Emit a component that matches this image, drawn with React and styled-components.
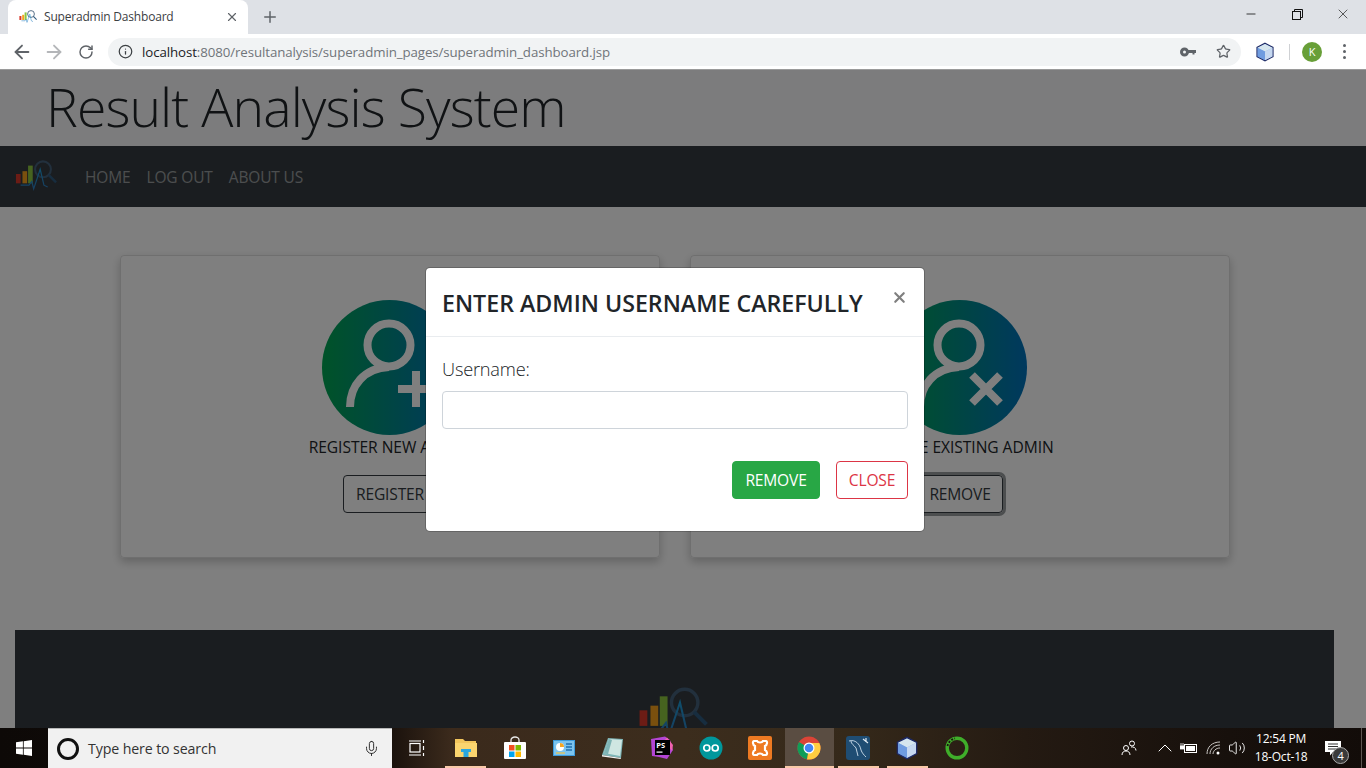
import styled, { createGlobalStyle } from "styled-components";
import { ArrowLeft, ArrowRight, RotateCw, Star, X, Plus, Minus, Info, Mic, ChevronUp, Volume2 } from "lucide-react";

const GlobalStyle = createGlobalStyle`
  html, body { margin: 0; padding: 0; overflow: hidden; }
  body { font-family: "Open Sans", "Liberation Sans", sans-serif; color: #212529; }
  * { box-sizing: border-box; }
`;

const Screen = styled.div`
  width: 1366px;
  height: 768px;
  display: flex;
  flex-direction: column;
  overflow: hidden;
`;

/* browser chrome */
const TabStrip = styled.div`
  height: 34px;
  flex: none;
  background: #dee1e6;
  display: flex;
  align-items: flex-end;
  padding-left: 8px;
`;

const Tab = styled.div`
  width: 240px;
  height: 34px;
  background: #fff;
  border-radius: 8px 8px 0 0;
  display: flex;
  align-items: center;
  padding: 0 9px 0 11px;
  font-size: 12px;
  letter-spacing: -0.2px;
  color: #3c4043;
`;

const TabTitle = styled.span`
  flex: 1;
  margin-left: 7px;
  margin-top: -1px;
`;

const NewTab = styled.div`
  width: 44px;
  height: 34px;
  display: flex;
  align-items: center;
  justify-content: center;
  color: #5f6368;
`;

const WindowButtons = styled.div`
  margin-left: auto;
  height: 34px;
  display: flex;
`;

const WindowButton = styled.div`
  width: 46px;
  height: 28px;
  display: flex;
  align-items: center;
  justify-content: center;
  color: #111;
`;

const Toolbar = styled.div`
  height: 36px;
  flex: none;
  background: #fff;
  border-bottom: 1px solid #9a9a9a;
  display: flex;
  align-items: center;
  padding: 0 6px;
`;

const NavButton = styled.div`
  width: 32px;
  height: 28px;
  display: flex;
  align-items: center;
  justify-content: center;
  color: ${(props) => (props.$disabled ? "#b4b6b9" : "#5f6368")};
`;

const Omnibox = styled.div`
  width: 1133px;
  height: 28px;
  margin-left: 6px;
  border-radius: 14px;
  background: #f1f3f4;
  display: flex;
  align-items: center;
  padding: 0 10px;
  color: #5f6368;
`;

const Url = styled.div`
  flex: 1;
  margin-left: 9px;
  font-size: 13.3px;
  letter-spacing: -0.1px;
  color: #70757a;
  b { font-weight: 400; color: #202124; }
`;

const OmniIcon = styled.div`
  display: flex;
  align-items: center;
  margin-left: ${(props) => props.$gap || 0}px;
`;

const ToolbarEnd = styled.div`
  flex: 1;
  display: flex;
  align-items: center;
  padding-left: 14px;
`;

const Divider = styled.div`
  width: 1px;
  height: 16px;
  background: #cfd1d4;
  margin: 0 12px 0 14px;
`;

const Avatar = styled.div`
  width: 20px;
  height: 20px;
  border-radius: 50%;
  background: #689f38;
  color: #fff;
  font-size: 11px;
  display: flex;
  align-items: center;
  justify-content: center;
`;

const Dots = styled.div`
  margin-left: 21px;
  display: flex;
  flex-direction: column;
  gap: 3px;
  i { width: 3px; height: 3px; border-radius: 50%; background: #5f6368; display: block; }
`;

/* page under the modal */
const Page = styled.div`
  position: relative;
  flex: 1;
  overflow: hidden;
  background: #fff;
`;

const Masthead = styled.div`
  height: 76px;
  background: #f8f9fa;
  padding-left: 46px;
`;

const Title = styled.h1`
  margin: 0;
  font-size: 53.5px;
  font-weight: 300;
  line-height: 74px;
  color: #212529;
  letter-spacing: -0.9px;
`;

const Navbar = styled.nav`
  height: 61px;
  background: #343a40;
  display: flex;
  align-items: center;
  padding-left: 15px;
`;

const NavLinks = styled.div`
  display: flex;
  gap: 16px;
  margin-left: 28px;
`;

const NavLink = styled.a`
  font-size: 15.5px;
  color: rgba(255, 255, 255, 0.5);
  letter-spacing: -0.15px;
`;

const CardRow = styled.div`
  display: flex;
  justify-content: center;
  gap: 30px;
  width: 1350px;
  padding-top: 48px;
`;

const Card = styled.div`
  width: 540px;
  height: 303px;
  border: 1px solid rgba(0, 0, 0, 0.125);
  border-radius: 4px;
  box-shadow: 0 4px 10px rgba(0, 0, 0, 0.22);
  display: flex;
  flex-direction: column;
  align-items: center;
  padding-top: 44px;
`;

const Badge = styled.svg`
  width: 135px;
  height: 135px;
  display: block;
  margin-right: 1px;
`;

const CardLabel = styled.div`
  margin-top: 1px;
  font-size: 15.6px;
  line-height: 22px;
  letter-spacing: -0.05px;
  white-space: nowrap;
`;

const CardButton = styled.div`
  margin-top: 17px;
  height: 38px;
  width: ${(props) => props.$width}px;
  border: 1px solid #343a40;
  border-radius: 4px;
  display: flex;
  align-items: center;
  justify-content: center;
  font-size: 15.6px;
  letter-spacing: -0.2px;
  color: #343a40;
  ${(props) => props.$focused && "box-shadow: 0 0 0 3px rgba(52, 58, 64, 0.5);"}
`;

const Footer = styled.footer`
  margin: 72px 32px 0 15px;
  height: 200px;
  background: #343a40;
  display: flex;
  justify-content: center;
  padding: 57px 4px 0 0;
`;

/* modal */
const Backdrop = styled.div`
  position: absolute;
  inset: 0;
  background: rgba(0, 0, 0, 0.5);
  padding: 197px 16px 0 0;
  display: flex;
  justify-content: center;
  align-items: flex-start;
`;

const Modal = styled.div`
  width: 500px;
  height: 265px;
  background: #fff;
  border: 1px solid rgba(0, 0, 0, 0.2);
  border-radius: 5px;
  background-clip: padding-box;
`;

const ModalHeader = styled.div`
  height: 69px;
  border-bottom: 1px solid #e9ecef;
  padding: 0 16px;
  display: flex;
  align-items: center;
  justify-content: space-between;
`;

const ModalTitle = styled.h4`
  margin: 2px 0 0;
  font-size: 23.2px;
  font-weight: 600;
  letter-spacing: 0;
  color: #212529;
  white-space: nowrap;
`;

const CloseX = styled.div`
  color: #7f7f7f;
  margin: -10px 0 0 0;
  display: flex;
`;

const ModalBody = styled.div`
  padding: 19px 16px 0;
`;

const FieldLabel = styled.label`
  display: block;
  font-size: 18.2px;
  font-weight: 300;
  line-height: 26px;
  letter-spacing: -0.2px;
  color: #212529;
`;

const TextInput = styled.input`
  display: block;
  width: 100%;
  height: 38px;
  margin-top: 9px;
  border: 1px solid #ced4da;
  border-radius: 4px;
  background: #fff;
`;

const ModalFooter = styled.div`
  display: flex;
  justify-content: flex-end;
  gap: 16px;
  margin-top: 32px;
`;

const ModalButton = styled.div`
  height: 38px;
  width: ${(props) => props.$width}px;
  border-radius: 4px;
  display: flex;
  align-items: center;
  justify-content: center;
  font-size: 15.6px;
  letter-spacing: -0.2px;
  border: 1px solid ${(props) => (props.$danger ? "#dc3545" : "#28a745")};
  background: ${(props) => (props.$danger ? "#fff" : "#28a745")};
  color: ${(props) => (props.$danger ? "#dc3545" : "#fff")};
`;

/* taskbar */
const Taskbar = styled.div`
  height: 40px;
  flex: none;
  display: flex;
  align-items: center;
  background: linear-gradient(90deg, #0d0907 0%, #150e0a 28%, #3b2a1c 33%, #3c2d1d 50%, #35291a 62%, #241a12 75%, #17100c 90%, #120c09 100%);
`;

const StartButton = styled.div`
  width: 48px;
  height: 40px;
  display: flex;
  align-items: center;
  justify-content: center;
`;

const SearchBox = styled.div`
  width: 344px;
  height: 40px;
  background: #f1f1f1;
  border-top: 1px solid #b8b8b8;
  display: flex;
  align-items: center;
  padding: 0 12px 0 9px;
  font-size: 14.2px;
  letter-spacing: -0.12px;
  color: #333;
`;

const Cortana = styled.div`
  width: 22px;
  height: 22px;
  border: 3px solid #111;
  border-radius: 50%;
  margin-right: 9px;
`;

const SearchText = styled.span`
  flex: 1;
`;

const TaskCell = styled.div`
  position: relative;
  width: 49.1px;
  height: 40px;
  flex: none;
  display: flex;
  align-items: center;
  justify-content: center;
  background: ${(props) => (props.$active ? "#5a4d42" : "transparent")};
  &::after {
    content: "";
    display: ${(props) => (props.$running ? "block" : "none")};
    position: absolute;
    left: ${(props) => (props.$active ? 0 : 4)}px;
    right: ${(props) => (props.$active ? 0 : 4)}px;
    bottom: 0;
    height: 2px;
    background: #f9c9a8;
  }
`;

const Tray = styled.div`
  flex: 1;
  display: flex;
  align-items: center;
  color: #fff;
  height: 40px;
  padding-left: 140px;
`;

const TrayIcon = styled.div`
  display: flex;
  align-items: center;
  margin-left: ${(props) => props.$gap || 0}px;
`;

const Clock = styled.div`
  width: 70px;
  margin-left: 0;
  text-align: center;
  font-size: 12px;
  line-height: 18px;
  letter-spacing: -0.2px;
`;

const Notify = styled.div`
  position: relative;
  margin-left: 9px;
  display: flex;
`;

const NotifyCount = styled.span`
  position: absolute;
  right: -8px;
  bottom: -8px;
  width: 17px;
  height: 17px;
  border-radius: 50%;
  background: #3a3a3a;
  border: 1px solid #aaa;
  color: #fff;
  font-size: 11px;
  line-height: 15px;
  text-align: center;
`;

const ShowDesktop = styled.div`
  width: 1px;
  height: 40px;
  background: #5c5651;
  margin-left: 20px;
`;

function Logo({ width, gid }) {
  return (
    <svg width={width} height={(width * 35) / 45} viewBox="0 0 45 35" fill="none">
      <defs>
        <linearGradient id={gid} x1="0" x2="0" y1="0" y2="1">
          <stop offset="0" stopColor="#1d9ad6" />
          <stop offset="1" stopColor="#2f7fc1" />
        </linearGradient>
      </defs>
      <rect x="1" y="15" width="5" height="10" fill="#d9392b" />
      <rect x="8" y="12" width="5" height="13" fill="#f5a11c" />
      <rect x="14" y="6" width="5" height="19" fill="#8cc63f" />
      <circle cx="30" cy="10" r="8.5" stroke="#44607a" strokeWidth="2.2" />
      <path d="M36 16 L44 24" stroke="#2e5a7e" strokeWidth="2.6" />
      <path d="M6 27 H15 L18 23 L20 31 L27 10 L31 27 L35 29" stroke={`url(#${gid})`} strokeWidth="1.3" />
    </svg>
  );
}

function PersonBadge({ gid, mark }) {
  return (
    <Badge viewBox="0 0 135 135">
      <defs>
        <linearGradient id={gid} x1="0" x2="1" y1="0" y2="0">
          <stop offset="0" stopColor="#00a651" />
          <stop offset="1" stopColor="#0071bc" />
        </linearGradient>
      </defs>
      <circle cx="67.5" cy="67.5" r="67.5" fill={`url(#${gid})`} />
      <g stroke="#fff" strokeWidth="8" fill="none">
        <circle cx="67" cy="45" r="21.5" />
        <path d="M28 107 C28 86 42 68 67 67" />
        {mark === "plus" ? (
          <path d="M76 89 H112 M94 71 V107" />
        ) : (
          <path d="M80 75 L108 103 M108 75 L80 103" />
        )}
      </g>
    </Badge>
  );
}

function WindowsMark() {
  return (
    <svg width="16" height="16" viewBox="0 0 16 16" fill="#fff">
      <path d="M0 2.3 L6.9 1.3 V7.6 H0 Z M7.7 1.2 L16 0 V7.6 H7.7 Z M0 8.4 H6.9 V14.7 L0 13.7 Z M7.7 8.4 H16 V16 L7.7 14.8 Z" />
    </svg>
  );
}

function KeyIcon() {
  return (
    <svg width="16" height="10" viewBox="0 0 16 10" fill="#5f6368">
      <path d="M4.500 0.500 A4.500 4.500 0 1 1 4.500 9.500 A4.500 4.500 0 0 1 4.500 0.500 Z M4.500 3.500 A1.500 1.500 0 1 0 4.500 6.500 A1.500 1.500 0 0 0 4.500 3.500 Z" fillRule="evenodd" />
      <path d="M8 3 H16 V6 H14.500 V7.500 H12.500 V6 H8 Z" />
    </svg>
  );
}

function CubeIcon({ size }) {
  return (
    <svg width={size} height={size} viewBox="0 0 24 24">
      <path d="M12 1.5 L21.5 6.5 V17.5 L12 22.5 L2.500 17.5 V6.5 Z" fill="#8fb4e8" stroke="#1e2a66" strokeWidth="1.600" />
      <path d="M12 11.500 L21 6.800 L12 2.500 L3 6.800 Z" fill="#d6e6ee" />
      <path d="M12 11.500 V22 L21 17.300 V6.800 Z" fill="#c6d8f0" />
      <path d="M3 6.800 L12 11.500 V22 L3 17.300 Z" fill="#6f9ce0" />
    </svg>
  );
}

function ExplorerIcon() {
  return (
    <svg width="22" height="20" viewBox="0 0 22 20">
      <path d="M0 1 H8 L10 3 H21 V19 H0 Z" fill="#f3c65c" />
      <path d="M0 5 H22 V19 H0 Z" fill="#fbd56f" />
      <path d="M6 14 V11 H16 V14 H13.500 V19 H8.500 V14 Z" fill="#2aa7e0" />
    </svg>
  );
}

function StoreIcon() {
  return (
    <svg width="24" height="24" viewBox="0 0 24 24">
      <path d="M8 7 V4 a4 3 0 0 1 8 0 V7" stroke="#e8e8e8" strokeWidth="1.300" fill="none" />
      <rect x="1" y="6" width="22" height="17" rx="1" fill="#fff" />
      <rect x="6" y="9" width="5.500" height="5.500" fill="#f25022" />
      <rect x="12.500" y="9" width="5.500" height="5.500" fill="#7fba00" />
      <rect x="6" y="15.500" width="5.500" height="5.500" fill="#00a4ef" />
      <rect x="12.500" y="15.500" width="5.500" height="5.500" fill="#ffb900" />
    </svg>
  );
}

function PanelIcon() {
  return (
    <svg width="22" height="16" viewBox="0 0 22 16">
      <rect x="0" y="0" width="22" height="16" fill="#3c9bdc" />
      <rect x="1" y="1" width="20" height="14" fill="#7cc4ef" />
      <circle cx="7" cy="7" r="4" fill="#fff" />
      <path d="M7 7 V3 A4 4 0 0 1 11 7 Z" fill="#f6a623" />
      <path d="M13 4 H19 M13 7 H19 M13 10 H19" stroke="#1f6fb0" strokeWidth="1.400" />
      <path d="M3 13 H12" stroke="#f6c344" strokeWidth="1.200" />
    </svg>
  );
}

function NotesIcon() {
  return (
    <svg width="24" height="24" viewBox="0 0 24 24">
      <path d="M7 2 L22 3 L20 22 L1 19 Z" fill="#7fb6b8" />
      <path d="M8 3 L21 4 L19 20 L3 17 Z" fill="#cfe6e2" />
      <path d="M1 19 L20 22 L19.500 23 L1 20.500 Z" fill="#f4f4f4" />
      <path d="M8 3 L3 17 L7 18 L11 4 Z" fill="#5b9ea3" opacity="0.7" />
    </svg>
  );
}

function StormIcon() {
  return (
    <svg width="24" height="24" viewBox="0 0 24 24">
      <path d="M1 3 L15 0.500 L20 4 L23 14 L17 23 L9 21 L2 20 Z" fill="#b345d4" />
      <path d="M17 1.500 L23 9 L22 15 L14 5 Z" fill="#f062b0" />
      <rect x="5" y="4" width="15" height="15" fill="#000" />
      <text x="6.300" y="12" fontSize="7.500" fontWeight="700" fill="#fff" fontFamily="'Open Sans', sans-serif">PS</text>
      <rect x="6.500" y="15.500" width="6" height="1.200" fill="#fff" />
    </svg>
  );
}

function ArduinoIcon() {
  return (
    <svg width="24" height="24" viewBox="0 0 24 24">
      <circle cx="12" cy="12" r="11.500" fill="#00979c" />
      <circle cx="7.800" cy="12" r="3" fill="none" stroke="#fff" strokeWidth="1.700" />
      <circle cx="16.200" cy="12" r="3" fill="none" stroke="#fff" strokeWidth="1.700" />
    </svg>
  );
}

function XamppIcon() {
  return (
    <svg width="24" height="24" viewBox="0 0 24 24">
      <rect x="0" y="0" width="24" height="24" rx="2" fill="#ee7a22" />
      <path d="M6 5 H9 C10 7 14 7 15 5 H18 C19.500 5 19.500 9 17 10 V14 C19.500 15 19.500 19 18 19 H15 C14 17 10 17 9 19 H6 C4.500 19 4.500 15 7 14 V10 C4.500 9 4.500 5 6 5 Z" fill="none" stroke="#fff" strokeWidth="2.200" />
    </svg>
  );
}

function ChromeIcon() {
  return (
    <svg width="24" height="24" viewBox="0 0 24 24">
      <circle cx="12" cy="12" r="11.500" fill="#db4437" />
      <path d="M12 12 L2 6 A11.500 11.500 0 0 0 10 23.300 Z" fill="#0f9d58" />
      <path d="M12 12 L10 23.400 A11.500 11.500 0 0 0 22.300 7 L12 7 Z" fill="#ffcd40" />
      <circle cx="12" cy="12" r="5.500" fill="#fff" />
      <circle cx="12" cy="12" r="4.300" fill="#4285f4" />
    </svg>
  );
}

function MysqlIcon() {
  return (
    <svg width="24" height="24" viewBox="0 0 24 24">
      <rect x="0" y="0" width="24" height="24" rx="3" fill="#1f4d73" />
      <path d="M3 5 C9 3 14 8 15 14 C16 17 18 19 20 21 M5 5 C5 8 8 9 10 12 C11 15 11 17 12 20" fill="none" stroke="#cfe0ee" strokeWidth="0.900" />
      <path d="M17 3 L22 7 M20 2 V6" stroke="#dfe9f1" strokeWidth="1.200" />
    </svg>
  );
}

function RingIcon() {
  return (
    <svg width="24" height="24" viewBox="0 0 24 24">
      <circle cx="12" cy="12" r="9.800" fill="none" stroke="#3fae2a" strokeWidth="3.400" />
      <path d="M2.500 10 A10 10 0 0 1 10 2.400" fill="none" stroke="#1c1410" strokeWidth="1.800" strokeDasharray="2 1.500" />
    </svg>
  );
}

function TaskViewIcon() {
  return (
    <svg width="16" height="16" viewBox="0 0 16 16" fill="none" stroke="#fff" strokeWidth="1.200">
      <rect x="1" y="3.500" width="10" height="8.500" />
      <path d="M0 1 H12 M0 15 H12 M14.500 0 V3 M14.500 6 V10 M14.500 13 V16" />
    </svg>
  );
}

function PeopleIcon() {
  return (
    <svg width="16" height="16" viewBox="0 0 16 16" fill="none" stroke="#fff" strokeWidth="1">
      <circle cx="5" cy="8" r="2.500" />
      <path d="M1 15 C1 12 3 11 5 11 C7 11 9 12 9 15" />
      <circle cx="11" cy="3.500" r="2.500" />
      <path d="M10 7 C12 6.500 15 7.500 15 10.500" />
    </svg>
  );
}

function BatteryIcon() {
  return (
    <svg width="17" height="12" viewBox="0 0 17 12" fill="none">
      <rect x="4.500" y="2.500" width="12" height="8" stroke="#fff" />
      <rect x="6" y="4" width="9" height="5" fill="#fff" />
      <path d="M0 4 H4 V7 H0 Z M1 1 V4 M3 1 V4" fill="#fff" stroke="#fff" strokeWidth="0.800" />
    </svg>
  );
}

function WifiIcon() {
  return (
    <svg width="16" height="14" viewBox="0 0 16 14" fill="none" stroke="#c9c6c3">
      <path d="M1 13 C1 6 6 1 14 1 M4 13 C4 8 8 4 14 4 M7 13 C7 10 10 7 14 7" />
      <circle cx="12" cy="12" r="1.500" fill="#fff" stroke="none" />
    </svg>
  );
}

function ActionCenterIcon() {
  return (
    <svg width="16" height="15" viewBox="0 0 16 15">
      <path d="M0 0 H16 V11 H8 L5 14.500 V11 H0 Z" fill="#fff" />
      <path d="M3 3 H13 M3 5.500 H13 M3 8 H13" stroke="#333" strokeWidth="1" />
    </svg>
  );
}

const taskApps = [
  { key: "view", icon: <TaskViewIcon /> },
  { key: "explorer", icon: <ExplorerIcon />, running: true },
  { key: "store", icon: <StoreIcon /> },
  { key: "panel", icon: <PanelIcon /> },
  { key: "notes", icon: <NotesIcon /> },
  { key: "storm", icon: <StormIcon /> },
  { key: "arduino", icon: <ArduinoIcon /> },
  { key: "xampp", icon: <XamppIcon /> },
  { key: "chrome", icon: <ChromeIcon />, running: true, active: true },
  { key: "mysql", icon: <MysqlIcon />, running: true },
  { key: "cube", icon: <CubeIcon size={24} />, running: true },
  { key: "ring", icon: <RingIcon /> },
];

export default function App() {
  return (
    <Screen>
      <GlobalStyle />
      <TabStrip>
        <Tab>
          <Logo width={18} gid="favicon-line" />
          <TabTitle>Superadmin Dashboard</TabTitle>
          <X size={14} color="#5f6368" />
        </Tab>
        <NewTab>
          <Plus size={18} />
        </NewTab>
        <WindowButtons>
          <WindowButton>
            <Minus size={14} strokeWidth={1.4} />
          </WindowButton>
          <WindowButton>
            <svg width="11" height="11" viewBox="0 0 11 11" fill="none" stroke="#111">
              <rect x="0.500" y="2.500" width="8" height="8" />
              <path d="M2.500 2.500 V0.500 H10.500 V8.500 H8.500" />
            </svg>
          </WindowButton>
          <WindowButton>
            <X size={16} strokeWidth={1} />
          </WindowButton>
        </WindowButtons>
      </TabStrip>

      <Toolbar>
        <NavButton>
          <ArrowLeft size={22} strokeWidth={2} />
        </NavButton>
        <NavButton $disabled>
          <ArrowRight size={22} strokeWidth={2} />
        </NavButton>
        <NavButton>
          <RotateCw size={16} strokeWidth={2.2} />
        </NavButton>
        <Omnibox>
          <Info size={15} color="#3c4043" />
          <Url>
            <b>localhost</b>:8080/resultanalysis/superadmin_pages/superadmin_dashboard.jsp
          </Url>
          <OmniIcon>
            <KeyIcon />
          </OmniIcon>
          <OmniIcon $gap={20}>
            <Star size={15} />
          </OmniIcon>
        </Omnibox>
        <ToolbarEnd>
          <CubeIcon size={20} />
          <Divider />
          <Avatar>K</Avatar>
          <Dots>
            <i />
            <i />
            <i />
          </Dots>
        </ToolbarEnd>
      </Toolbar>

      <Page>
        <Masthead>
          <Title>Result Analysis System</Title>
        </Masthead>
        <Navbar>
          <Logo width={42} gid="nav-line" />
          <NavLinks>
            <NavLink>HOME</NavLink>
            <NavLink>LOG OUT</NavLink>
            <NavLink>ABOUT US</NavLink>
          </NavLinks>
        </Navbar>
        <CardRow>
          <Card>
            <PersonBadge gid="badge-add" mark="plus" />
            <CardLabel>REGISTER NEW ADMIN</CardLabel>
            <CardButton $width={94}>REGISTER</CardButton>
          </Card>
          <Card>
            <PersonBadge gid="badge-remove" mark="cross" />
            <CardLabel>REMOVE EXISTING ADMIN</CardLabel>
            <CardButton $width={86} $focused>REMOVE</CardButton>
          </Card>
        </CardRow>
        <Footer>
          <Logo width={70} gid="footer-line" />
        </Footer>

        <Backdrop>
          <Modal>
            <ModalHeader>
              <ModalTitle>ENTER ADMIN USERNAME CAREFULLY</ModalTitle>
              <CloseX>
                <X size={17} strokeWidth={3} />
              </CloseX>
            </ModalHeader>
            <ModalBody>
              <FieldLabel>Username:</FieldLabel>
              <TextInput type="text" />
              <ModalFooter>
                <ModalButton $width={88}>REMOVE</ModalButton>
                <ModalButton $width={72} $danger>CLOSE</ModalButton>
              </ModalFooter>
            </ModalBody>
          </Modal>
        </Backdrop>
      </Page>

      <Taskbar>
        <StartButton>
          <WindowsMark />
        </StartButton>
        <SearchBox>
          <Cortana />
          <SearchText>Type here to search</SearchText>
          <Mic size={17} strokeWidth={1.3} color="#222" />
        </SearchBox>
        {taskApps.map((app) => (
          <TaskCell key={app.key} $active={app.active} $running={app.running}>
            {app.icon}
          </TaskCell>
        ))}
        <Tray>
          <PeopleIcon />
          <TrayIcon $gap={16}>
            <ChevronUp size={24} strokeWidth={1} />
          </TrayIcon>
          <TrayIcon $gap={3}>
            <BatteryIcon />
          </TrayIcon>
          <TrayIcon $gap={9}>
            <WifiIcon />
          </TrayIcon>
          <TrayIcon $gap={6}>
            <Volume2 size={18} strokeWidth={1.2} />
          </TrayIcon>
          <Clock>
            12:54 PM
            <br />
            18-Oct-18
          </Clock>
          <Notify>
            <ActionCenterIcon />
            <NotifyCount>4</NotifyCount>
          </Notify>
          <ShowDesktop />
        </Tray>
      </Taskbar>
    </Screen>
  );
}
